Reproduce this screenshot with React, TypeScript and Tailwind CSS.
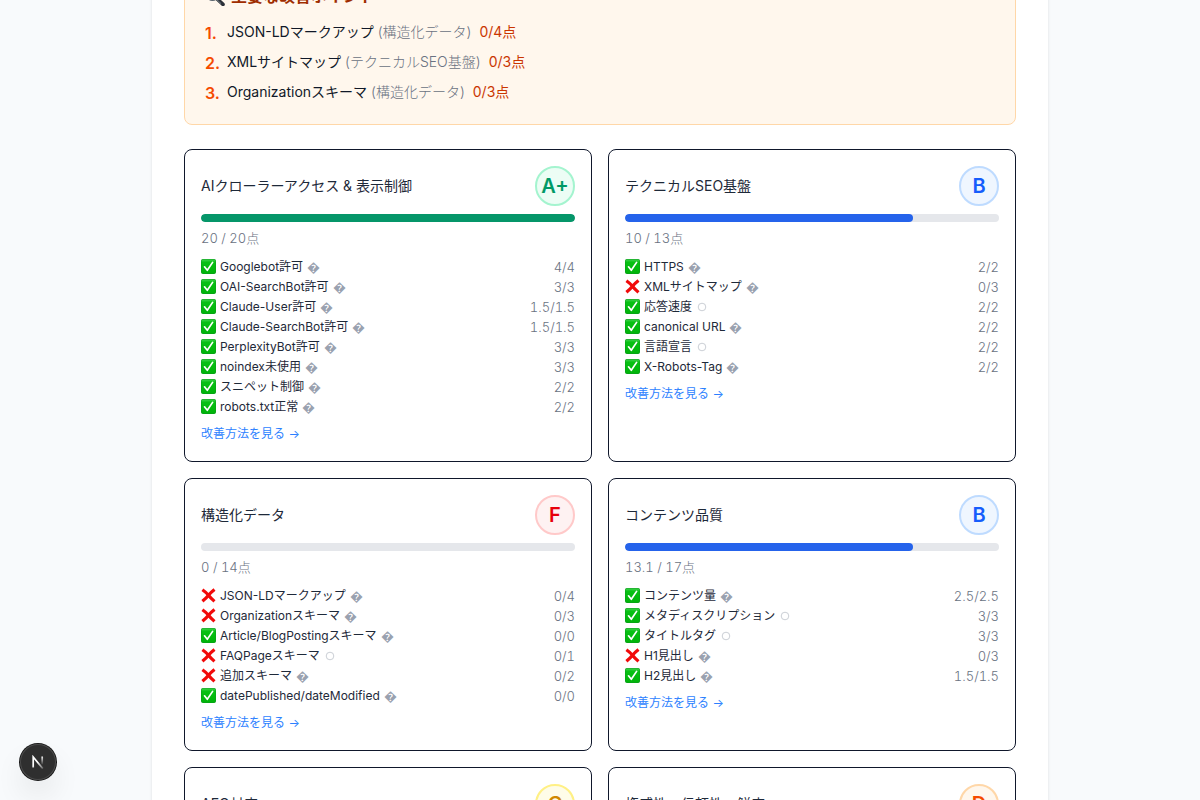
type Mark = "diamond" | "circle";
type Item = { ok: boolean; name: string; mark: Mark; score: string };
type Section = {
  title: string;
  grade: string;
  badge: string;
  bar: string;
  percent: number;
  total: string;
  items: Item[];
};

const item = (ok: boolean, name: string, score: string, mark: Mark = "diamond"): Item => ({ ok, name, mark, score });

const blueBadge = "border-blue-200 bg-blue-50 text-blue-600";

const sections: Section[] = [
  {
    title: "AIクローラーアクセス & 表示制御",
    grade: "A+",
    badge: "border-emerald-200 bg-emerald-50 text-emerald-600",
    bar: "bg-[#059669]",
    percent: 100,
    total: "20 / 20点",
    items: [
      item(true, "Googlebot許可", "4/4"),
      item(true, "OAI-SearchBot許可", "3/3"),
      item(true, "Claude-User許可", "1.5/1.5"),
      item(true, "Claude-SearchBot許可", "1.5/1.5"),
      item(true, "PerplexityBot許可", "3/3"),
      item(true, "noindex未使用", "3/3"),
      item(true, "スニペット制御", "2/2"),
      item(true, "robots.txt正常", "2/2"),
    ],
  },
  {
    title: "テクニカルSEO基盤",
    grade: "B",
    badge: blueBadge,
    bar: "bg-[#2563eb]",
    percent: 77,
    total: "10 / 13点",
    items: [
      item(true, "HTTPS", "2/2"),
      item(false, "XMLサイトマップ", "0/3"),
      item(true, "応答速度", "2/2", "circle"),
      item(true, "canonical URL", "2/2"),
      item(true, "言語宣言", "2/2", "circle"),
      item(true, "X-Robots-Tag", "2/2"),
    ],
  },
  {
    title: "構造化データ",
    grade: "F",
    badge: "border-red-200 bg-red-50 text-red-600",
    bar: "bg-red-600",
    percent: 0,
    total: "0 / 14点",
    items: [
      item(false, "JSON-LDマークアップ", "0/4"),
      item(false, "Organizationスキーマ", "0/3"),
      item(true, "Article/BlogPostingスキーマ", "0/0"),
      item(false, "FAQPageスキーマ", "0/1", "circle"),
      item(false, "追加スキーマ", "0/2"),
      item(true, "datePublished/dateModified", "0/0"),
    ],
  },
  {
    title: "コンテンツ品質",
    grade: "B",
    badge: blueBadge,
    bar: "bg-[#2563eb]",
    percent: 77,
    total: "13.1 / 17点",
    items: [
      item(true, "コンテンツ量", "2.5/2.5"),
      item(true, "メタディスクリプション", "3/3", "circle"),
      item(true, "タイトルタグ", "3/3", "circle"),
      item(false, "H1見出し", "0/3"),
      item(true, "H2見出し", "1.5/1.5"),
    ],
  },
  {
    title: "AEO対応",
    grade: "C",
    badge: "border-yellow-200 bg-yellow-50 text-yellow-600",
    bar: "bg-yellow-600",
    percent: 60,
    total: "",
    items: [],
  },
  {
    title: "権威性・信頼性・鮮度",
    grade: "D",
    badge: "border-orange-200 bg-orange-50 text-orange-600",
    bar: "bg-orange-600",
    percent: 45,
    total: "",
    items: [],
  },
];

const priorities = [
  { name: "JSON-LDマークアップ", group: "(構造化データ)", score: "0/4点" },
  { name: "XMLサイトマップ", group: "(テクニカルSEO基盤)", score: "0/3点" },
  { name: "Organizationスキーマ", group: "(構造化データ)", score: "0/3点" },
];

function CheckIcon() {
  return (
    <svg viewBox="0 0 15 15" className="size-[15px] shrink-0" aria-label="合格">
      <defs>
        <linearGradient id="green" x1="0" y1="0" x2="0" y2="1">
          <stop offset="0" stopColor="#3fd24c" />
          <stop offset="0.2" stopColor="#08c114" />
          <stop offset="1" stopColor="#00b309" />
        </linearGradient>
      </defs>
      <rect width="15" height="15" rx="2" fill="#0a9a1c" />
      <rect x="0.5" y="0.5" width="14" height="14" rx="1.7" fill="url(#green)" />
      <path d="M3.5 7.8 6.3 11.3 11.6 3.4" fill="none" stroke="#fff" strokeWidth="1.7" strokeLinecap="round" strokeLinejoin="round" />
    </svg>
  );
}

function CrossIcon() {
  return (
    <svg viewBox="0 0 15 15" className="size-[15px] shrink-0" aria-label="不合格">
      <path d="M1.4 1.7Q5.3 4.4 7.5 7.3T13.5 13.4M13.5 1.5Q9.7 4.5 7.5 7.3T1.4 13.3" fill="none" stroke="#f10a0a" strokeWidth="3.2" strokeLinecap="butt" />
    </svg>
  );
}

function MagnifierIcon() {
  return (
    <svg viewBox="0 0 20 20" className="size-5 shrink-0" aria-hidden="true">
      <path d="m11 11.8 7 6.6" stroke="#2b3138" strokeWidth="3.6" strokeLinecap="round" />
      <path d="m10.8 12.6 5 4.8" stroke="#7b8791" strokeWidth="1" strokeLinecap="round" />
      <circle cx="7.5" cy="8.2" r="6" fill="#b9dcef" stroke="#59636c" strokeWidth="1.6" />
    </svg>
  );
}

function MarkGlyph({ mark }: { mark: Mark }) {
  if (mark === "circle") {
    return (
      <svg viewBox="0 0 12 12" className="size-3 shrink-0" aria-hidden="true">
        <circle cx="6" cy="6" r="3.8" fill="none" stroke="#b5bac3" strokeWidth="0.7" />
      </svg>
    );
  }
  return <span className="text-[13px] leading-4 text-gray-400">{"\uFFFD"}</span>;
}

function SectionCard({ section }: { section: Section }) {
  return (
    <section className="rounded-lg border border-slate-900 p-4">
      <div className="flex items-center justify-between">
        <h3 className="text-sm text-gray-800">{section.title}</h3>
        <span className={`flex size-10 items-center justify-center rounded-full border-2 text-xl font-semibold ${section.badge}`}>
          {section.grade}
        </span>
      </div>
      <div className="mt-2 h-2 overflow-hidden rounded bg-gray-200">
        <div className={`h-full rounded ${section.bar}`} style={{ width: `${section.percent}%` }} />
      </div>
      <p className="mt-1.5 text-[13px] leading-5 font-light text-gray-500 tabular-nums">{section.total}</p>
      <ul className="mt-2.5 space-y-[3px]">
        {section.items.map((entry) => (
          <li key={entry.name} className="flex items-center justify-between text-xs leading-4">
            <span className="flex items-center gap-1 text-gray-800">
              {entry.ok ? <CheckIcon /> : <CrossIcon />}
              <span className="pt-px">{entry.name}</span>
              <MarkGlyph mark={entry.mark} />
            </span>
            <span className="text-[13px] leading-4 font-light text-gray-500 tabular-nums">{entry.score}</span>
          </li>
        ))}
      </ul>
      <a href="#guide" className="mt-2 inline-block text-xs leading-[22px] text-blue-500">
        改善方法を見る →
      </a>
    </section>
  );
}

export default function App() {
  return (
    <div className="relative h-screen overflow-hidden bg-slate-50 font-['Inter','Noto_Sans_CJK_JP',sans-serif] font-normal">
      <main className="mx-auto -mt-[37px] max-w-4xl bg-white px-8 pb-8 shadow-sm">
        <section className="rounded-lg border border-orange-200 bg-orange-50 p-5">
          <h2 className="flex items-center gap-1.5 text-base leading-6 font-semibold text-orange-800">
            <MagnifierIcon />
            主要な改善ポイント
          </h2>
          <ol className="mt-3 space-y-1.5">
            {priorities.map((entry, index) => (
              <li key={entry.name} className="flex items-center gap-2 text-sm leading-6">
                <span className="w-3.5 pt-0.5 text-base leading-5 font-semibold text-orange-600">{index + 1}.</span>
                <span>
                  <span className="text-gray-900">{entry.name}</span>{" "}
                  <span className="font-light text-gray-500">{entry.group}</span>
                  <span className="ml-2 text-orange-700">{entry.score}</span>
                </span>
              </li>
            ))}
          </ol>
        </section>
        <div className="mt-6 grid grid-cols-2 gap-4">
          {sections.map((section) => (
            <SectionCard key={section.title} section={section} />
          ))}
        </div>
      </main>
      <button
        type="button"
        aria-label="開発ツール"
        className="absolute bottom-5 left-5 flex size-9 items-center justify-center rounded-full bg-[#2f2f2f] shadow-[0_0_0_1px_#171717,inset_0_0_0_1px_#4b4b4b,0_16px_32px_-8px_rgba(0,0,0,0.24)]"
      >
        <svg viewBox="0 0 14 14" className="size-3.5" fill="none" aria-hidden="true">
          <defs>
            <linearGradient id="diag" x1="7" y1="7" x2="12" y2="14" gradientUnits="userSpaceOnUse">
              <stop stopColor="#fff" />
              <stop offset="1" stopColor="#fff" stopOpacity="0.2" />
            </linearGradient>
            <linearGradient id="stem" x1="11" y1="1" x2="11" y2="10" gradientUnits="userSpaceOnUse">
              <stop stopColor="#fff" />
              <stop offset="1" stopColor="#fff" stopOpacity="0" />
            </linearGradient>
          </defs>
          <path d="M2.2 12.5V2L11.8 13.6" stroke="url(#diag)" strokeWidth="1.7" />
          <path d="M11.2 1.5V9.5" stroke="url(#stem)" strokeWidth="1.7" />
        </svg>
      </button>
    </div>
  );
}
